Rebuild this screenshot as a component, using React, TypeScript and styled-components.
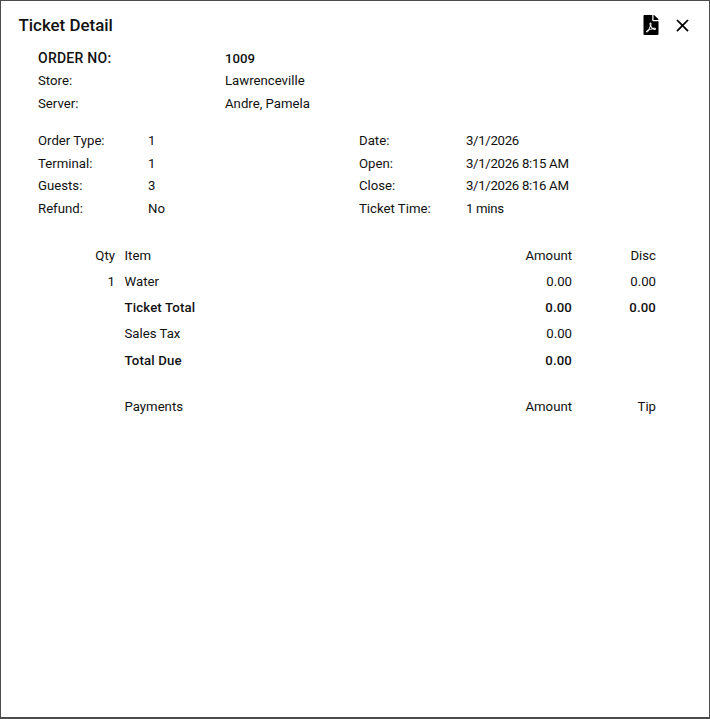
import React from 'react';
import styled, { createGlobalStyle } from 'styled-components';
import { FaFilePdf } from 'react-icons/fa';
import { MdClose } from 'react-icons/md';

const GlobalStyle = createGlobalStyle`
  html, body {
    margin: 0;
    padding: 0;
    background: #fff;
  }
`;

const Dialog = styled.div`
  box-sizing: border-box;
  width: 710px;
  height: 719px;
  border: 1px solid #4c4c4c;
  border-bottom-width: 2px;
  background: #fff;
  color: #111;
  font-family: Roboto, 'Liberation Sans', sans-serif;
  font-size: 13.2px;
  overflow: hidden;
`;

const Header = styled.div`
  display: flex;
  justify-content: space-between;
  align-items: center;
  height: 24px;
  padding: 12px 16px 0 17.5px;
`;

const Title = styled.div`
  font-size: 16.9px;
  font-weight: 500;
`;

const Actions = styled.div`
  display: flex;
  align-items: center;
  gap: 11px;
  color: #000;
`;

const Body = styled.div`
  padding: 10.5px 0 0 37px;
`;

const InfoLine = styled.div<{ $bold?: boolean }>`
  display: grid;
  grid-template-columns: 187px 1fr;
  height: 22.5px;
  line-height: 22.5px;
  font-weight: ${p => (p.$bold ? 500 : 400)};
`;

const OrderLabel = styled.div`
  font-size: 14px;
  letter-spacing: 0.25px;
  line-height: 21px;
`;

const Columns = styled.div`
  display: grid;
  grid-template-columns: 321px 1fr;
  margin-top: 15px;
`;

const Pair = styled.div<{ $label: number }>`
  display: grid;
  grid-template-columns: ${p => p.$label}px 1fr;
  height: 22.5px;
  line-height: 22.5px;
`;

const DateValue = styled.div`
  letter-spacing: -0.3px;
`;

const Lines = styled.div`
  margin-top: 22.5px;
  width: 618px;
`;

const Line = styled.div<{ $bold?: boolean; $h?: number; $gap?: number }>`
  display: grid;
  grid-template-columns: 77px 1fr 100px 84px;
  height: ${p => p.$h || 26}px;
  line-height: ${p => p.$h || 26}px;
  margin-top: ${p => p.$gap || 0}px;
  font-weight: ${p => (p.$bold ? 500 : 400)};
  letter-spacing: ${p => (p.$bold ? '0.15px' : 'normal')};
`;

const Qty = styled.div`
  text-align: right;
`;

const Name = styled.div`
  padding-left: 9.5px;
`;

const Num = styled.div`
  text-align: right;
`;

const order = [
  ['Order Type:', '1'],
  ['Terminal:', '1'],
  ['Guests:', '3'],
  ['Refund:', 'No'],
];

const times = [
  ['Date:', '3/1/2026'],
  ['Open:', '3/1/2026 8:15 AM'],
  ['Close:', '3/1/2026 8:16 AM'],
  ['Ticket Time:', '1 mins'],
];

const App = () => (
  <Dialog>
    <GlobalStyle />
    <Header>
      <Title>Ticket Detail</Title>
      <Actions>
        <FaFilePdf size={20} />
        <MdClose size={21} />
      </Actions>
    </Header>
    <Body>
      <InfoLine $bold>
        <OrderLabel>ORDER NO:</OrderLabel>
        <div>1009</div>
      </InfoLine>
      <InfoLine>
        <div>Store:</div>
        <div>Lawrenceville</div>
      </InfoLine>
      <InfoLine>
        <div>Server:</div>
        <div>Andre, Pamela</div>
      </InfoLine>
      <Columns>
        <div>
          {order.map(([k, v]) => (
            <Pair $label={110} key={k}>
              <div>{k}</div>
              <div>{v}</div>
            </Pair>
          ))}
        </div>
        <div>
          {times.map(([k, v]) => (
            <Pair $label={107} key={k}>
              <div>{k}</div>
              <DateValue>{v}</DateValue>
            </Pair>
          ))}
        </div>
      </Columns>
      <Lines>
        <Line>
          <Qty>Qty</Qty>
          <Name>Item</Name>
          <Num>Amount</Num>
          <Num>Disc</Num>
        </Line>
        <Line>
          <Qty>1</Qty>
          <Name>Water</Name>
          <Num>0.00</Num>
          <Num>0.00</Num>
        </Line>
        <Line $bold>
          <Qty />
          <Name>Ticket Total</Name>
          <Num>0.00</Num>
          <Num>0.00</Num>
        </Line>
        <Line>
          <Qty />
          <Name>Sales Tax</Name>
          <Num>0.00</Num>
          <Num />
        </Line>
        <Line $bold $h={27}>
          <Qty />
          <Name>Total Due</Name>
          <Num>0.00</Num>
          <Num />
        </Line>
        <Line $gap={20}>
          <Qty />
          <Name>Payments</Name>
          <Num>Amount</Num>
          <Num>Tip</Num>
        </Line>
      </Lines>
    </Body>
  </Dialog>
);

export default App;
